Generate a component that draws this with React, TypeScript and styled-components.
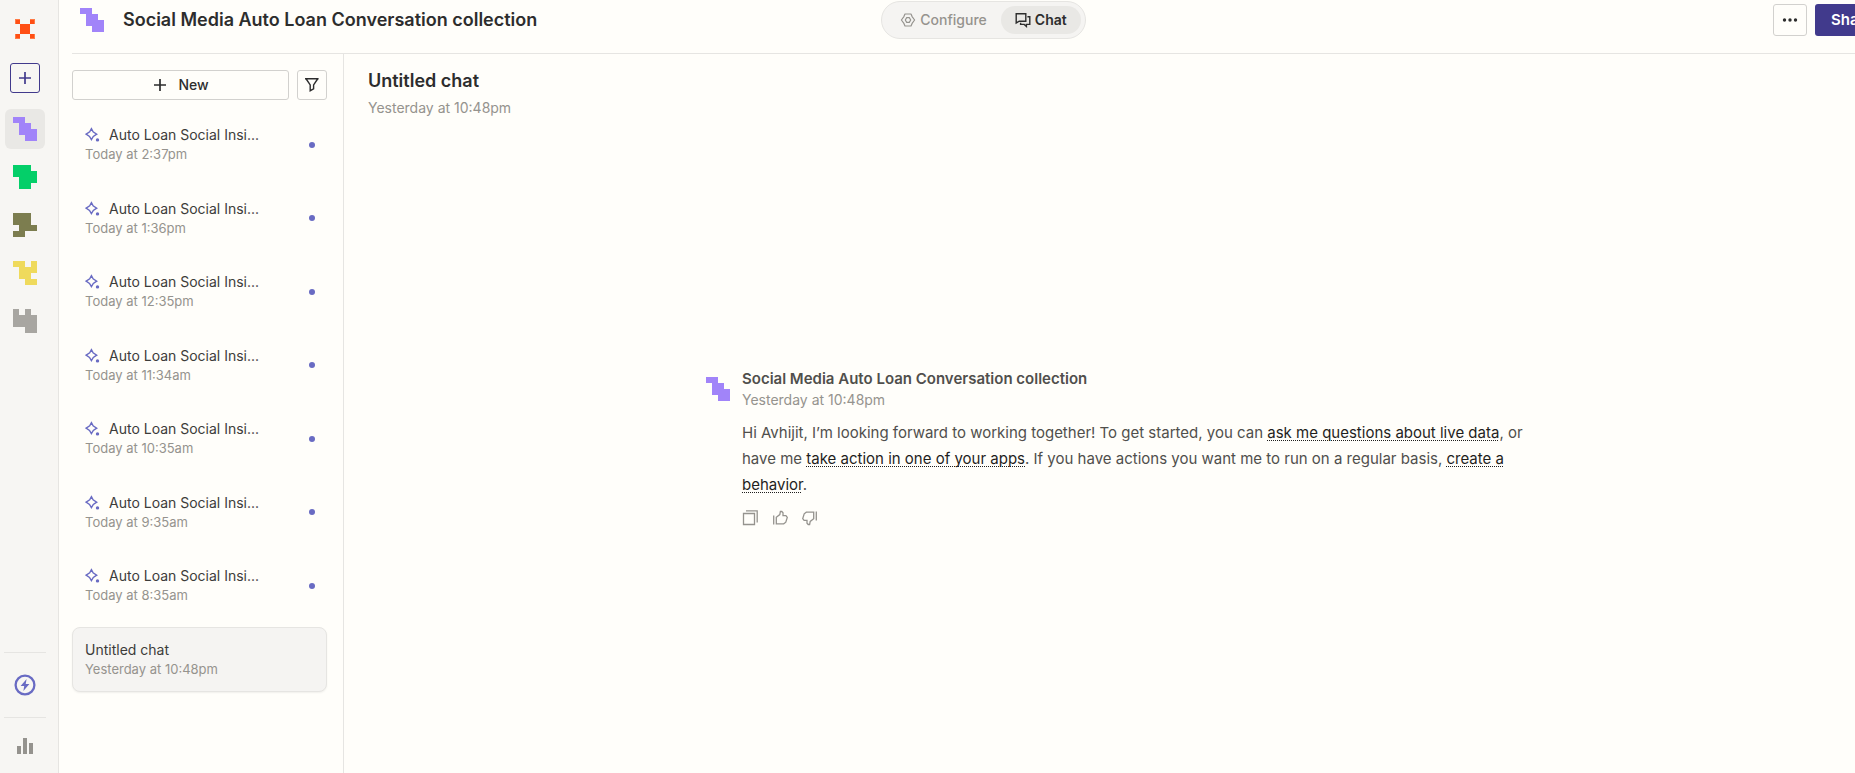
import React from "react";
import styled, { createGlobalStyle } from "styled-components";

const color = {
  page: "#fffefa",
  rail: "#f7f6f3",
  line: "#e6e5e2",
  control: "#d2d1ce",
  ink: "#2d2d2d",
  body: "#504f4c",
  muted: "#95938e",
  accent: "#696bc3",
  indigo: "#413a8c",
  violet: "#a184f9",
  raised: "#f5f4f2",
  active: "#e9e8e5",
};

const GlobalStyle = createGlobalStyle`
  *, *::before, *::after { box-sizing: border-box; }
  html, body { margin: 0; }
  body {
    overflow: hidden;
    background: ${color.page};
    color: ${color.ink};
    font-family: Inter, "Liberation Sans", sans-serif;
    font-size: 14px;
    line-height: 20px;
  }
  button { font: inherit; color: inherit; cursor: pointer; padding: 0; border: 0; background: none; }
  h1, h2, h3, p, ul { margin: 0; padding: 0; }
  ul { list-style: none; }
  svg { display: block; flex: none; }
`;

/* The workspace is slightly wider than the viewport and is clipped on the right. */
const Shell = styled.div`
  display: flex;
  width: calc(100% + 52px);
  min-height: 100vh;
  padding-right: 12px;
`;

const Rail = styled.nav`
  display: flex;
  flex: none;
  flex-direction: column;
  width: 59px;
  padding: 19px 12px 0 4px;
  background: ${color.rail};
  border-right: 1px solid ${color.line};
`;

const RailLogo = styled.a`
  align-self: center;
  margin-bottom: 24px;
`;

const AddButton = styled.button`
  display: grid;
  place-items: center;
  align-self: center;
  width: 30px;
  height: 30px;
  margin-bottom: 16px;
  border: 1px solid ${color.indigo};
  border-radius: 3px;
  color: ${color.indigo};
`;

const AgentList = styled.ul`
  display: flex;
  flex-direction: column;
  align-items: center;
  gap: 8px;
`;

const AgentTile = styled.button<{ $active?: boolean }>`
  display: grid;
  place-items: center;
  width: 40px;
  height: 40px;
  border-radius: 6px;
  background: ${(p) => (p.$active ? color.active : "transparent")};
`;

const RailFooter = styled.div`
  margin-top: auto;
`;

const RailAction = styled.button<{ $tone: string; $tall?: boolean }>`
  display: grid;
  place-items: center;
  width: 100%;
  height: ${(p) => (p.$tall ? 65 : 56)}px;
  border-top: 1px solid ${color.line};
  color: ${(p) => p.$tone};
`;

const Workspace = styled.div`
  display: flex;
  flex: 1;
  flex-direction: column;
  min-width: 0;
  padding-left: 13px;
`;

const TopBar = styled.header`
  display: grid;
  grid-template-columns: 1fr auto 1fr;
  align-items: center;
  height: 54px;
  padding-bottom: 13px;
  border-bottom: 1px solid ${color.line};
`;

const Heading = styled.div`
  display: flex;
  align-items: center;
  gap: 19px;
  padding-left: 8px;
`;

const Title = styled.h1`
  font-size: 18px;
  font-weight: 600;
  line-height: 24px;
  white-space: nowrap;
`;

const Toggle = styled.div`
  display: flex;
  align-items: center;
  height: 38px;
  padding: 4px;
  border: 1px solid ${color.line};
  border-radius: 20px;
  background: ${color.raised};
`;

const ToggleOption = styled.button<{ $active?: boolean }>`
  display: flex;
  align-items: center;
  gap: 4px;
  height: 28px;
  padding: 0 14px;
  border-radius: 14px;
  background: ${(p) => (p.$active ? color.active : "transparent")};
  color: ${(p) => (p.$active ? color.ink : color.muted)};
  font-weight: ${(p) => (p.$active ? 600 : 500)};
`;

const Actions = styled.div`
  display: flex;
  justify-content: flex-end;
  gap: 8px;
`;

const OutlineButton = styled.button<{ $grow?: boolean; $width?: number }>`
  display: flex;
  align-items: center;
  justify-content: center;
  gap: 10px;
  flex: ${(p) => (p.$grow ? "1" : "none")};
  width: ${(p) => (p.$width ? `${p.$width}px` : "auto")};
  min-height: 30px;
  border: 1px solid ${color.control};
  border-radius: 3px;
  font-weight: 500;
`;

const ShareButton = styled.button`
  width: 80px;
  height: 32px;
  padding-left: 16px;
  border-radius: 3px;
  background: ${color.indigo};
  color: #ffffff;
  font-size: 15px;
  font-weight: 600;
  text-align: left;
`;

const Columns = styled.div`
  display: flex;
  flex: 1;
`;

const ChatColumn = styled.aside`
  flex: none;
  width: 272px;
  padding: 16px 16px 0 0;
  border-right: 1px solid ${color.line};
`;

const ChatTools = styled.div`
  display: flex;
  gap: 8px;
  margin-bottom: 12px;
`;

const ChatList = styled.ul`
  display: flex;
  flex-direction: column;
  gap: 8px;
`;

const ChatItem = styled.button<{ $selected?: boolean }>`
  display: flex;
  align-items: center;
  justify-content: space-between;
  width: 100%;
  padding: 12px 11px 12px 12px;
  border: 1px solid ${(p) => (p.$selected ? color.line : "transparent")};
  border-radius: 8px;
  background: ${(p) => (p.$selected ? color.raised : "transparent")};
  box-shadow: ${(p) => (p.$selected ? "0 1px 2px rgba(0, 0, 0, 0.06)" : "none")};
  text-align: left;
`;

const ChatName = styled.span`
  display: flex;
  align-items: center;
  gap: 8px;
  color: #3d3c3a;
`;

const ChatTime = styled.span`
  display: block;
  color: ${color.muted};
  font-size: 13px;
  line-height: 1.5;
`;

const UnreadDot = styled.span`
  width: 6px;
  height: 6px;
  border-radius: 50%;
  background: ${color.accent};
`;

const Conversation = styled.main`
  display: flex;
  flex: 1;
  flex-direction: column;
  min-width: 0;
`;

const ConversationHead = styled.div`
  padding: 15px 24px 2px;
`;

const ConversationTitle = styled.h2`
  margin-bottom: 5px;
  font-size: 18px;
  font-weight: 600;
  line-height: 24px;
`;

const Muted = styled.p`
  color: ${color.muted};
`;

const Thread = styled.div`
  display: flex;
  flex: 1;
  flex-direction: column;
  align-items: center;
  justify-content: center;
`;

const Message = styled.article`
  display: flex;
  gap: 12px;
  width: 100%;
  max-width: 827px;
`;

const Avatar = styled.div`
  flex: none;
  padding-top: 9px;
`;

const Author = styled.h3`
  color: ${color.body};
  font-size: 15px;
  font-weight: 600;
  line-height: 22px;
`;

const MessageText = styled.p`
  margin: 10px 0 12px;
  color: ${color.body};
  font-size: 15px;
  line-height: 26px;
`;

const PromptLink = styled.a`
  color: #1f1e1d;
  text-decoration: underline dotted 1px;
  text-decoration-skip-ink: none;
  text-underline-offset: 2px;
`;

const Feedback = styled.div`
  display: flex;
  gap: 14px;
  color: ${color.muted};
`;

type Tone = { rows: string[]; fill: string; name: string };

const agents: Tone[] = [
  { name: "Social Media Auto Loan", fill: color.violet, rows: ["11..", ".11.", ".111", "..11"] },
  { name: "Green agent", fill: "#04cf69", rows: ["111.", "1111", ".111", ".11."] },
  { name: "Olive agent", fill: "#7c7d4f", rows: ["111.", "111.", ".111", "11.."] },
  { name: "Yellow agent", fill: "#efda5c", rows: ["11.1", ".111", ".11.", "..11"] },
  { name: "Gray agent", fill: "#a8a6a1", rows: ["1.1.", "1111", "1111", "..11"] },
];

const PixelGlyph = ({ rows, fill }: { rows: string[]; fill: string }) => (
  <svg width="24" height="24" viewBox="0 0 4 4" fill={fill} shapeRendering="crispEdges" aria-hidden="true">
    {rows.flatMap((row, y) =>
      [...row].map((cell, x) => (cell === "1" ? <rect key={`${x}${y}`} x={x} y={y} width="1" height="1" /> : null)),
    )}
  </svg>
);

const BrandMark = () => (
  <svg width="20" height="20" viewBox="0 0 20 20" aria-hidden="true">
    <g fill="#ff7a45">
      <path d="M0 0h5v5H0zM15 0h5v5h-5zM0 15h5v5H0zM15 15h5v5h-5z" />
    </g>
    <path fill="#ff4f14" d="M1 1h4v4H1zM15 1h4v4h-4zM1 15h4v4H1zM15 15h4v4h-4zM5 5h10v10H5z" />
  </svg>
);

const PlusIcon = ({ size }: { size: number }) => (
  <svg width={size} height={size} viewBox="0 0 16 16" stroke="currentColor" strokeWidth="1.7" aria-hidden="true">
    <path d="M8 2v12M2 8h12" />
  </svg>
);

const FilterIcon = () => (
  <svg width="16" height="16" viewBox="0 0 16 16" fill="none" stroke="currentColor" strokeWidth="1.4" aria-hidden="true">
    <path d="M1 1.800h13.600M2.200 2l4 5.900v5.800l3.400-1.900V7.900l4-5.900" />
  </svg>
);

const SparkIcon = () => (
  <svg width="16" height="16" viewBox="0 0 16 16" fill="none" aria-hidden="true">
    <path
      d="M6.400 1.700 8.100 4.800 11.700 7.200 8.300 9.400 6.400 12.700 4.500 9.400 1.100 7.200 4.700 4.800z"
      stroke={color.accent}
      strokeWidth="1.4"
    />
    <circle cx="12.5" cy="12.9" r="1.7" fill={color.accent} />
  </svg>
);

const GearIcon = () => (
  <svg width="16" height="16" viewBox="0 0 16 16" fill="none" stroke="currentColor" strokeWidth="1.2" strokeLinejoin="round" aria-hidden="true">
    <path d="M5 2h6l1.100 2.600L14.600 8l-2.500 3.400L11 14H5l-1.100-2.600L1.400 8l2.500-3.400z" />
    <path d="M6.700 5.600h2.600L10.700 8l-1.400 2.400H6.700L5.300 8z" />
  </svg>
);

const ChatIcon = () => (
  <svg width="16" height="16" viewBox="0 0 16 16" fill="none" stroke="currentColor" strokeWidth="1.4" aria-hidden="true">
    <path d="M1.200 1.800h9.600v7.400H4.200L1.200 11z" />
    <path d="M12.400 4.800h2.400v7.600h-2.200M5.600 10.800v1.600h3.600l2.200 2v-2h2" />
  </svg>
);

const MoreIcon = () => (
  <svg width="16" height="16" viewBox="0 0 16 16" fill="currentColor" aria-hidden="true">
    <circle cx="2.500" cy="8" r="1.700" />
    <circle cx="8" cy="8" r="1.700" />
    <circle cx="13.500" cy="8" r="1.700" />
  </svg>
);

const BoltIcon = () => (
  <svg width="22" height="22" viewBox="0 0 22 22" fill="none" aria-hidden="true">
    <circle cx="11" cy="11" r="9.400" stroke="currentColor" strokeWidth="2.300" />
    <path d="M12.600 5 6.600 12h3.600l-.8 5 6-7h-3.700z" fill="currentColor" />
  </svg>
);

const BarsIcon = () => (
  <svg width="16" height="16" viewBox="0 0 16 16" fill="currentColor" aria-hidden="true">
    <path d="M0 8h4v8H0zM6 0h4v16H6zM12 5h4v11h-4z" />
  </svg>
);

const CopyIcon = () => (
  <svg width="16" height="16" viewBox="0 0 16 16" fill="none" stroke="currentColor" strokeWidth="1.3" aria-hidden="true">
    <path d="M1.500 3.500h11v11h-11z" />
    <path d="M4 .9h11.200v11.600" />
  </svg>
);

const ThumbIcon = ({ down }: { down?: boolean }) => (
  <svg width="16" height="16" viewBox="0 0 16 16" fill="none" stroke="currentColor" strokeWidth="1.3" aria-hidden="true">
    <g transform={down ? "rotate(180 8 8)" : undefined}>
      <path d="M1.700 5.500v9" />
      <path d="M4.300 13.800V7.300L7.800 4.600 8.400 1.500h1.400L11 2.700v2.900h2.900l1.400 1.800-1.500 4.800-2.100 1.600z" />
    </g>
  </svg>
);

const chats = ["2:37pm", "1:36pm", "12:35pm", "11:34am", "10:35am", "9:35am", "8:35am"];
const agentName = "Social Media Auto Loan Conversation collection";

export default function App() {
  return (
    <>
      <GlobalStyle />
      <Shell>
        <Rail aria-label="Agents">
          <RailLogo href="#" aria-label="Home">
            <BrandMark />
          </RailLogo>
          <AddButton aria-label="New agent">
            <PlusIcon size={16} />
          </AddButton>
          <AgentList>
            {agents.map((agent, i) => (
              <li key={agent.name}>
                <AgentTile $active={i === 0} aria-label={agent.name}>
                  <PixelGlyph rows={agent.rows} fill={agent.fill} />
                </AgentTile>
              </li>
            ))}
          </AgentList>
          <RailFooter>
            <RailAction $tone={color.accent} $tall aria-label="Activity">
              <BoltIcon />
            </RailAction>
            <RailAction $tone={color.muted} aria-label="Usage">
              <BarsIcon />
            </RailAction>
          </RailFooter>
        </Rail>

        <Workspace>
          <TopBar>
            <Heading>
              <PixelGlyph rows={agents[0].rows} fill={color.violet} />
              <Title>{agentName}</Title>
            </Heading>
            <Toggle>
              <ToggleOption>
                <GearIcon />
                Configure
              </ToggleOption>
              <ToggleOption $active aria-pressed="true">
                <ChatIcon />
                Chat
              </ToggleOption>
            </Toggle>
            <Actions>
              <OutlineButton $width={34} aria-label="More options">
                <MoreIcon />
              </OutlineButton>
              <ShareButton>Share</ShareButton>
            </Actions>
          </TopBar>

          <Columns>
            <ChatColumn>
              <ChatTools>
                <OutlineButton $grow>
                  <PlusIcon size={16} />
                  New
                </OutlineButton>
                <OutlineButton $width={30} aria-label="Filter chats">
                  <FilterIcon />
                </OutlineButton>
              </ChatTools>
              <ChatList>
                {chats.map((time) => (
                  <li key={time}>
                    <ChatItem>
                      <span>
                        <ChatName>
                          <SparkIcon />
                          Auto Loan Social Insi...
                        </ChatName>
                        <ChatTime>Today at {time}</ChatTime>
                      </span>
                      <UnreadDot />
                    </ChatItem>
                  </li>
                ))}
                <li>
                  <ChatItem $selected>
                    <span>
                      <ChatName>Untitled chat</ChatName>
                      <ChatTime>Yesterday at 10:48pm</ChatTime>
                    </span>
                  </ChatItem>
                </li>
              </ChatList>
            </ChatColumn>

            <Conversation>
              <ConversationHead>
                <ConversationTitle>Untitled chat</ConversationTitle>
                <Muted>Yesterday at 10:48pm</Muted>
              </ConversationHead>
              <Thread>
                <Message>
                  <Avatar>
                    <PixelGlyph rows={agents[0].rows} fill={color.violet} />
                  </Avatar>
                  <div>
                    <Author>{agentName}</Author>
                    <Muted>Yesterday at 10:48pm</Muted>
                    <MessageText>
                      Hi Avhijit, I’m looking forward to working together! To get started, you can{" "}
                      <PromptLink href="#">ask me questions about live data</PromptLink>, or have me{" "}
                      <PromptLink href="#">take action in one of your apps</PromptLink>. If you have actions you want
                      me to run on a regular basis, <PromptLink href="#">create a behavior</PromptLink>.
                    </MessageText>
                    <Feedback>
                      <button aria-label="Copy">
                        <CopyIcon />
                      </button>
                      <button aria-label="Good response">
                        <ThumbIcon />
                      </button>
                      <button aria-label="Bad response">
                        <ThumbIcon down />
                      </button>
                    </Feedback>
                  </div>
                </Message>
              </Thread>
            </Conversation>
          </Columns>
        </Workspace>
      </Shell>
    </>
  );
}
